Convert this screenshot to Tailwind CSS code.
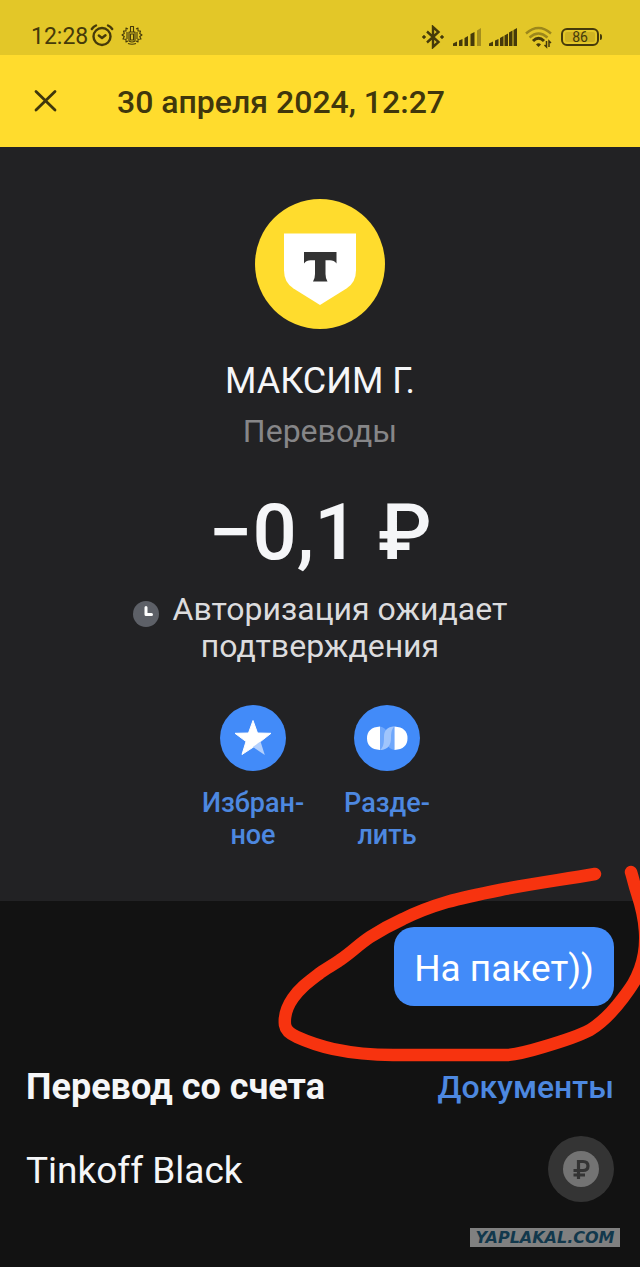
<!DOCTYPE html>
<html lang="ru">
<head>
    <meta charset="UTF-8">
    <meta name="viewport" content="width=device-width, initial-scale=1">
    <title>30 апреля 2024, 12:27</title>
    <script src="https://cdn.jsdelivr.net/npm/@tailwindcss/browser@4"></script>
</head>
<body class="min-h-screen flex flex-col bg-[#121212] font-[Roboto,sans-serif] text-[#f5f6f8] overflow-x-hidden">

    <!-- Status bar -->
    <div class="h-[55px] pt-[18px] pl-[31px] pr-[38px] flex items-center justify-between bg-[#e3c728] text-[#453a0a]">
        <div class="flex items-center gap-0.5">
            <span class="text-[23px] leading-6">12:28</span>
            <svg class="w-6 h-6 -mt-1" viewBox="0 0 24 24" fill="none" stroke="currentColor" stroke-width="2.400" stroke-linecap="round" stroke-linejoin="round">
                <circle cx="12" cy="13.500" r="8.500"/>
                <path d="M8.800 12.500 12 15l3.500-2.800M1.800 6Q3.500 3.500 6 2.500M22.200 6Q20.500 3.500 18 2.500"/>
            </svg>
            <svg class="w-6 h-6 ml-1 -mt-1" viewBox="0 0 24 24" fill="none" stroke="currentColor" stroke-width="1.1" stroke-linejoin="round">
                <path d="M10.500 3.500h3V9h-3zM9 9h6v9q-3 2-6 0zM10.500 11h3v6h-3z"/>
                <path d="M8 6 6 5v3L3.500 8l.8 2.500L2 12l2.300 1.500L3 16l3 .2V19l2-1M16 6l2-1v3l2.500 0-.8 2.500L22 12l-2.300 1.500L21 16l-3 .2V19l-2-1M7 9v7M17 9v7M8 20.500q4 1.500 8 0"/>
            </svg>
        </div>
        <div class="flex items-center">
            <svg class="w-6 h-6" viewBox="0 0 24 24" fill="none" stroke="currentColor" stroke-width="2.400">
                <path d="M6 6.500 17.500 17l-5.500 5V2l5.500 5L6 17.500"/>
                <circle cx="3" cy="12" r="1.300" fill="currentColor" stroke-width="1"/>
                <circle cx="21" cy="12" r="1.300" fill="currentColor" stroke-width="1"/>
            </svg>
            <svg class="w-7 h-5 ml-2" viewBox="0 0 28 20" fill="currentColor">
                <path d="M0 19v-2.500l4-2V19zM6 19v-5.500l3.500-1.500v7zM11.500 19v-8l3.500-2V19zM17.500 19V7l4-2v14z"/>
                <path opacity=".4" d="M24 19V3.500L28 1v18z"/>
            </svg>
            <svg class="w-7 h-5 ml-2" viewBox="0 0 28 20" fill="currentColor">
                <path d="M0 19v-2.500l4-2V19zM6 19v-5.500l3.500-1.500v7zM11 19v-8l3.500-2V19zM15.500 19V8.500l3.500-2V19zM20 19V5.500l3.500-2V19zM24.500 19V3L28 1v18z"/>
            </svg>
            <svg class="w-7 h-6 ml-2" viewBox="0 0 28 24" fill="none" stroke="currentColor" stroke-width="2.400">
                <path opacity=".45" d="M1 8.500Q13.500-2.500 26 8.500M4.500 12.500Q13.500 4.500 22.500 12.500"/>
                <path d="M8 16Q13.500 10.500 19 16" stroke-width="3"/>
                <path d="M11 19.500Q13.500 17 16 19.500L13.500 22z" fill="currentColor" stroke="none"/>
                <path d="M21.500 16v6l-2-2M24 22v-6l2 2" stroke-width="1.500"/>
            </svg>
            <div class="ml-2 flex items-center gap-px">
                <div class="w-[38px] h-[18px] p-0.5 rounded-md border-2 border-current">
                    <div class="h-full rounded-xs bg-[#cfb322] text-[14px] leading-[11px] text-center">86</div>
                </div>
                <div class="w-0.5 h-[6px] rounded-r-sm bg-current"></div>
            </div>
        </div>
    </div>

    <!-- Header -->
    <header class="h-[92px] pl-[33px] flex items-center gap-[60px] bg-[#ffdc2d] text-[#40370c]">
        <button type="button" aria-label="Закрыть">
            <svg class="w-6 h-6" viewBox="0 0 24 24" fill="none" stroke="currentColor" stroke-width="2.800" stroke-linecap="round">
                <path d="M3 2.500l19 18.500M22 2.500 3 21"/>
            </svg>
        </button>
        <h1 class="pt-0.5 text-[32px] leading-10 font-medium">30 апреля 2024, 12:27</h1>
    </header>

    <!-- Operation -->
    <main class="pt-[52px] pb-[50px] flex flex-col items-center text-center bg-[#222224]">
        <svg class="w-[130px] h-[130px]" viewBox="0 0 130 130">
            <circle cx="65" cy="65" r="65" fill="#ffdc2d"/>
            <path fill="#fff" d="M29 34.500h72v37q0 12-9.500 18L65 106 38.500 89.500Q29 83.500 29 71.500z"/>
            <path fill="#333" d="M49 53h32.500v11.500q-2.500-3.200-6.500-3.200h-4.500V75q0 4.500 2 7.500H58q2-3 2-7.500V61.300h-4.500q-4 0-6.500 3.200z"/>
        </svg>
        <h2 class="mt-[30px] text-[36px] leading-11">МАКСИМ Г.</h2>
        <p class="mt-2 text-[32px] leading-10 text-[#868688]">Переводы</p>
        <p class="mt-[38px] text-[78px] leading-[88px] font-medium">−0,1 ₽</p>
        <p class="mt-3.5 text-[32px] leading-[37px] text-[#dcdcde]">
            <svg class="inline-block w-[26px] h-[26px] mr-1.5 align-[-7px]" viewBox="0 0 26 26">
                <circle cx="13" cy="13" r="13" fill="#5d6067"/>
                <path d="M13 6.500v7h5.500" fill="none" stroke="#fff" stroke-width="3" stroke-linecap="round" stroke-linejoin="round"/>
            </svg>
            Авторизация ожидает<br>подтверждения
        </p>

        <div class="mt-10 grid grid-cols-2 text-[27px] leading-8 font-medium text-[#4d88e0]">
            <button type="button" class="w-[134px] flex flex-col items-center gap-4">
                <svg class="w-[66px] h-[66px]" viewBox="0 0 66 66">
                    <circle cx="33" cy="33" r="33" fill="#428bf9"/>
                    <path fill="#fff" stroke="#fff" stroke-linejoin="round" d="M33 15.500l4.500 12.500 13.500.3-10.800 8.500-7.200 5.500L22 49.500l4-13L15 28.300l13.500-.3z"/>
                    <path fill="#b3d0fd" d="M40.500 36.500l4.300 13.500-11.800-8z"/>
                </svg>
                <span>Избран-<br>ное</span>
            </button>
            <button type="button" class="w-[134px] flex flex-col items-center gap-4">
                <svg class="w-[66px] h-[66px]" viewBox="0 0 66 66">
                    <circle cx="33" cy="33" r="33" fill="#428bf9"/>
                    <path fill="#6fa7fb" d="M26 21.500Q31.500 22.500 33 27Q35 21.500 40.500 21.500V45Q35 44 33.500 39.500Q31.500 45 26 45z"/>
                    <path fill="#a0c5fc" d="M40.500 21.500C33 21.500 30 26 30 32C30 39 29 43 26 45C34 45 37 40 37 33C37 27 38 23.500 40.500 21.500z"/>
                    <path fill="#fff" d="M26 21.500v23.500q-13-1-13-11.750t13-11.750zM40.500 21.500q13 1 13 11.750T40.500 45z"/>
                </svg>
                <span>Разде-<br>лить</span>
            </button>
        </div>
    </main>

    <!-- Message and account -->
    <section class="relative grow px-[26px] pt-[26px] pb-16">
        <div class="flex justify-end">
            <p class="px-5 pt-5 pb-[15px] rounded-[20px] bg-[#428bf9] text-[37px] leading-11 text-white">На пакет))</p>
        </div>

        <div class="mt-[58px] flex items-center justify-between">
            <h3 class="pt-px text-[36px] leading-11 font-bold">Перевод со счета</h3>
            <a href="#" class="text-[32px] leading-11 font-medium text-[#4d88e0]">Документы</a>
        </div>

        <div class="mt-[27px] flex items-center justify-between">
            <span class="pt-1 text-[37px] leading-11">Tinkoff Black</span>
            <svg class="w-[66px] h-[66px]" viewBox="0 0 66 66">
                <circle cx="33" cy="33" r="33" fill="#343434"/>
                <circle cx="33" cy="33" r="18" fill="#737373"/>
                <path d="M30.500 43V25.500H35q5 0 5 4.500t-5 4.500h-9.500M25.500 39H37" fill="none" stroke="#343434" stroke-width="3.200"/>
            </svg>
        </div>

        <!-- marker stroke around the message -->
        <svg class="absolute right-0 -top-[41px] w-[370px] h-[210px] pointer-events-none" viewBox="270 860 370 210" fill="none" stroke="#f7330f" stroke-width="12.500" stroke-linecap="round" stroke-linejoin="round">
            <path d="M595 874C560 880 530 884 500 890C480 894 465 897 447 902C430 907 417 912 403 919C390 925 381 930 370 937C358 945 352 952 340 960C333 965 327 968 320 973C307 983 300 988 293 998C286 1008 284 1016 285 1025C286 1031 290 1034 297 1037C308 1042 320 1046 333 1049C352 1053 370 1055 393 1055H507C520 1054 530 1051 543 1047C560 1042 577 1037 590 1030C603 1022 614 1010 623 998C632 986 636 980 640 969C645 955 646 945 645 931C644 915 641 905 637 893C634 884 633 878 631 872"/>
        </svg>

        <div class="absolute right-5 bottom-5 w-[150px] h-[19px] bg-[#808080] text-center text-[16px] leading-[19px] font-bold italic font-['DejaVu_Sans',sans-serif] text-[#12384c]">YAPLAKAL.COM</div>
    </section>
</body>
</html>
